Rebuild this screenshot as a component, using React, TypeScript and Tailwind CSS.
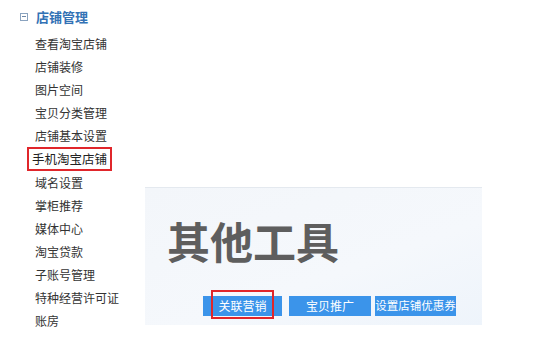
import React from "react";

const items = [
  "查看淘宝店铺",
  "店铺装修",
  "图片空间",
  "宝贝分类管理",
  "店铺基本设置",
  "手机淘宝店铺",
  "域名设置",
  "掌柜推荐",
  "媒体中心",
  "淘宝贷款",
  "子账号管理",
  "特种经营许可证",
  "账房",
];

const font = { fontFamily: '"Noto Sans CJK SC", "Microsoft YaHei", sans-serif' };

export default function App() {
  return (
    <div className="flex w-[558px] h-[343px] bg-white overflow-hidden" style={font}>
      <div className="w-[145px] shrink-0 pt-[5px]">
        <div className="flex items-center h-[23px] pl-[20px]">
          <span className="relative w-[8px] h-[8px] border border-[#8aa3bf] mr-[8px]">
            <span className="absolute left-[1px] right-[1px] top-[2.5px] h-px bg-[#6d87a6]" />
          </span>
          <span className="text-[13px] font-bold text-[#3272b5] leading-none">店铺管理</span>
        </div>
        <div className="mt-[4px] flex flex-col">
          {items.map((t) =>
            t === "手机淘宝店铺" ? (
              <div
                key={t}
                className="ml-[27px] w-[85px] h-[24px] border-2 border-[#e0262b] flex items-center pl-[3px] text-[12.5px] text-[#222] leading-none whitespace-nowrap"
              >
                {t}
              </div>
            ) : (
              <div key={t} className="h-[23px] pl-[35px] flex items-center text-[12px] text-[#333] leading-none whitespace-nowrap">
                {t}
              </div>
            )
          )}
        </div>
      </div>
      <div className="pt-[187px]">
        <div className="w-[337px] h-[138px] border-t border-[#e4e9ef] bg-[linear-gradient(160deg,#f3f6fa_0%,#f5f8fc_60%,#eef4fb_100%)]">
          <div className="pl-[22px] pt-[31px] text-[43px] font-bold leading-none text-[#5e5e5e]">
            其他工具
          </div>
          <div className="flex pl-[58px] mt-[34px] text-[12px] text-white leading-none whitespace-nowrap">
            <div className="relative w-[79px] h-[20px] bg-[#3b94ea] flex items-center justify-center">
              关联营销
              <span className="absolute left-[8px] top-[-6px] w-[63px] h-[29px] border-2 border-[#e0262b]" />
            </div>
            <div className="ml-[7px] w-[82px] h-[20px] bg-[#3b94ea] flex items-center justify-center">宝贝推广</div>
            <div className="ml-[4px] w-[81px] h-[20px] bg-[#3b94ea] flex items-center justify-center text-[11.5px]">设置店铺优惠券</div>
          </div>
        </div>
      </div>
    </div>
  );
}
